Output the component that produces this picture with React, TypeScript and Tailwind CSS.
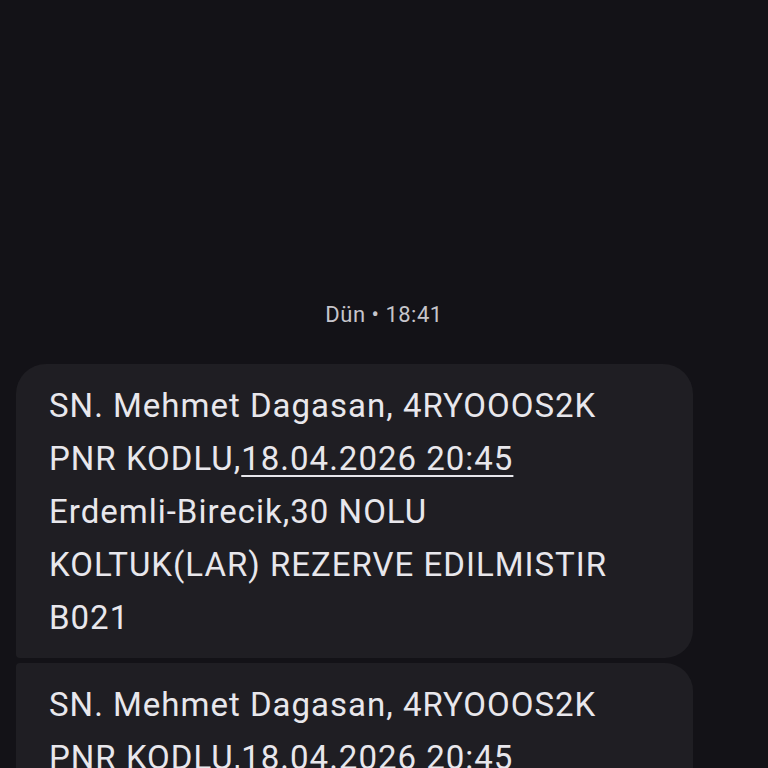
export default function App() {
  const lines = (
    <>
      SN. Mehmet Dagasan, 4RYOOOS2K
      <br />
      PNR KODLU,
      <span className="underline decoration-2 underline-offset-[5px]">18.04.2026 20:45</span>
      <br />
      Erdemli-Birecik,30 NOLU
      <br />
      KOLTUK(LAR) REZERVE EDILMISTIR
      <br />
      B021
    </>
  );

  return (
    <div className="h-[768px] w-[768px] overflow-hidden bg-[#131217]" style={{ fontFamily: 'Roboto, "Noto Sans", sans-serif' }}>
      <div className="flex flex-col pt-[300px]">
        <p className="text-center text-[22px] leading-[30px] tracking-[0.5px] text-[#c6c5cb]">Dün • 18:41</p>
        <div className="mt-[34px] flex flex-col gap-[5px] pl-4">
          <div className="w-[677px] rounded-t-[30px] rounded-br-[28px] rounded-bl-[4px] bg-[#1f1e23] pb-[14px] pl-[33px] pr-4 pt-[15px] text-[33px] leading-[53px] tracking-[1px] text-[#e8e7ec]">
            {lines}
          </div>
          <div className="w-[677px] rounded-tr-[28px] rounded-tl-[4px] bg-[#1f1e23] pb-[14px] pl-[33px] pr-4 pt-[15px] text-[33px] leading-[53px] tracking-[1px] text-[#e8e7ec]">
            {lines}
          </div>
        </div>
      </div>
    </div>
  );
}
